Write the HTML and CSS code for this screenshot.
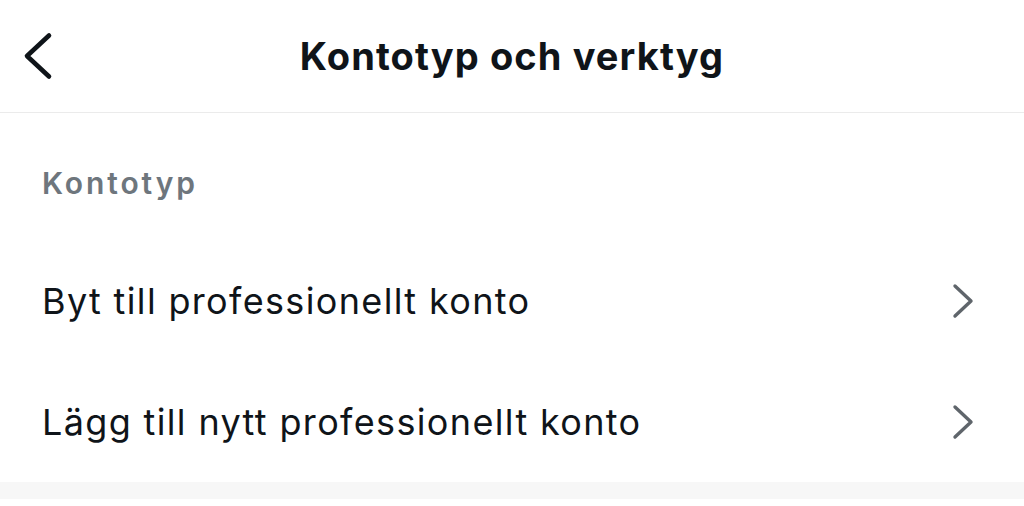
FILE: index.html
```html
<!DOCTYPE html>
<html lang="sv">
    <head>
        <meta charset="UTF-8" />
        <meta name="viewport" content="width=device-width, initial-scale=1.0" />
        <title>Kontotyp och verktyg</title>
        <link rel="stylesheet" href="styles.css">
    </head>
    <body>
        <header class="topbar">
            <button class="back" aria-label="Tillbaka">
                <svg width="32" height="50" viewBox="0 0 32 50">
                    <path d="M27 4.5 L5 25 L27 45.5" fill="none" stroke="#0f1419" stroke-width="4.6" stroke-linecap="round" stroke-linejoin="round" />
                </svg>
            </button>
            <h1 class="title">Kontotyp och verktyg</h1>
            <div></div>
        </header>

        <section class="group">
            <h2 class="group-label">Kontotyp</h2>
            <div class="row">
                <span class="row-text">Byt till professionellt konto</span>
                <svg class="chev" width="24" height="38" viewBox="0 0 24 38">
                    <path d="M4 4 L20 19 L4 34" fill="none" stroke="#5f656b" stroke-width="3.4" stroke-linecap="round" stroke-linejoin="round" />
                </svg>
            </div>
            <div class="row">
                <span class="row-text">Lägg till nytt professionellt konto</span>
                <svg class="chev" width="24" height="38" viewBox="0 0 24 38">
                    <path d="M4 4 L20 19 L4 34" fill="none" stroke="#5f656b" stroke-width="3.4" stroke-linecap="round" stroke-linejoin="round" />
                </svg>
            </div>
        </section>

        <div class="spacer"></div>
    </body>
</html>
```

FILE: styles.css
```css
body {
    margin: 0;
    background: #ffffff;
    font-family: "Inter", "Liberation Sans", sans-serif;
    color: #0f1419;
}

.topbar {
    display: grid;
    grid-template-columns: 1fr auto 1fr;
    align-items: center;
    height: 112px;
    border-bottom: 1px solid #ebebeb;
}

.back {
    justify-self: start;
    display: flex;
    margin-left: 22px;
    padding: 0;
    border: none;
    background: none;
}

.title {
    margin: 0;
    font-size: 38px;
    font-weight: 700;
    letter-spacing: 1.1px;
}

.group-label {
    margin: 0;
    padding: 50px 42px 37px;
    line-height: 40px;
    font-size: 30px;
    font-weight: 600;
    letter-spacing: 2.9px;
    color: #6e767d;
}

.row {
    display: flex;
    justify-content: space-between;
    align-items: center;
    height: 121px;
    padding: 0 49px 0 42px;
}

.row-text {
    font-size: 36px;
    font-weight: 400;
    letter-spacing: 1.35px;
}

.spacer {
    height: 17px;
    background: #f7f7f7;
}
```
